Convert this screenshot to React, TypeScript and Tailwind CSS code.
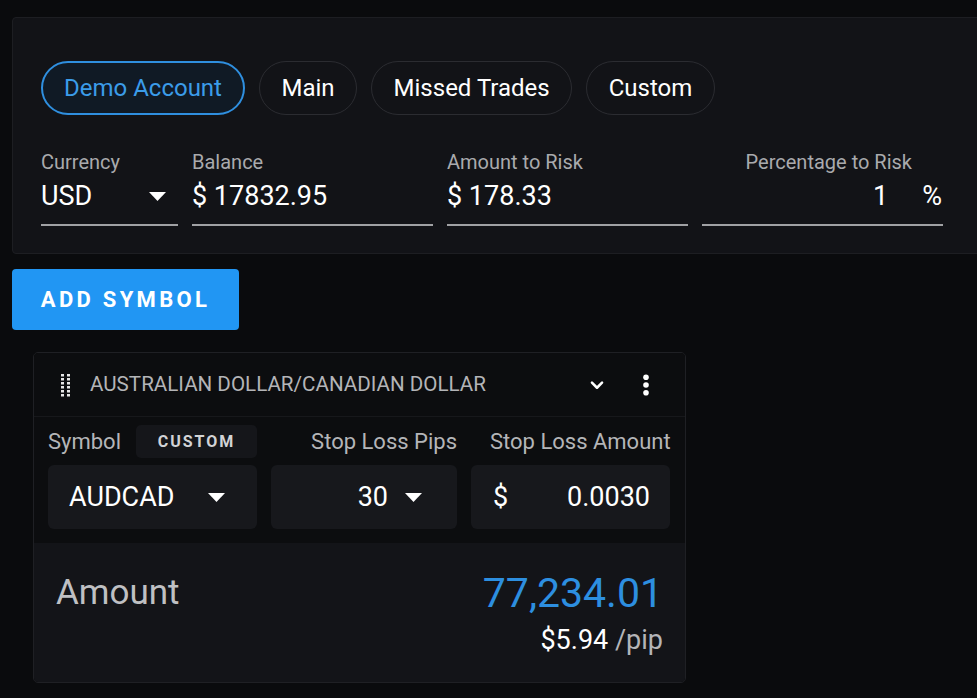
import React from 'react';

const Caret = () => (
    <svg width="17" height="9" viewBox="0 0 17 9" fill="currentColor"><path d="M0 0h17L8.5 9z" /></svg>
);

const Chip = ({ label, active }: { label: string; active?: boolean }) => (
    <div
        className={
            active
                ? 'h-[54px] px-[21px] flex items-center rounded-full border-2 border-[#2f8fdf] bg-[#101a25] text-[#3b9ce9] text-[24px]'
                : 'h-[54px] px-[21.5px] flex items-center rounded-full border border-[#2b2c31] text-white text-[24px]'
        }
    >
        {label}
    </div>
);

const Field = ({ label, children, className }: { label: string; children: React.ReactNode; className?: string }) => (
    <div className={'flex flex-col ' + (className || '')}>
        <span className="text-[20px] text-[#a9aaad] leading-[26px]">{label}</span>
        <div className="h-[51px] pb-[6px] flex items-center border-b-2 border-[#a0a1a4] text-white text-[27px]">{children}</div>
    </div>
);

const DragHandle = () => (
    <svg width="12" height="24" viewBox="0 0 12 24" fill="#e6e6e6">
        {[0, 1, 2, 3, 4, 5].map((r) => (
            <React.Fragment key={r}>
                <rect x="1" y={1 + r * 4} width="3" height="2.5" />
                <rect x="7" y={1 + r * 4} width="3" height="2.5" />
            </React.Fragment>
        ))}
    </svg>
);

export default function App() {
    return (
        <div className="w-[977px] h-[698px] overflow-hidden bg-[#0a0b0d]" style={{ fontFamily: 'Roboto, "Liberation Sans", sans-serif' }}>
            <div className="pt-[17px] pl-[12px]">
                {/* account panel */}
                <div className="w-[990px] h-[237px] bg-[#121317] border border-[#1d1e22] rounded-[4px] pl-[28px] pt-[43px]">
                    <div className="flex gap-[14px]">
                        <Chip label="Demo Account" active />
                        <Chip label="Main" />
                        <Chip label="Missed Trades" />
                        <Chip label="Custom" />
                    </div>
                    <div className="flex gap-[14px] mt-[34px]">
                        <Field label="Currency" className="w-[137px]">
                            <span className="flex-1">USD</span>
                            <span className="mr-[12px] text-white"><Caret /></span>
                        </Field>
                        <Field label="Balance" className="w-[241px]">
                            $ 17832.95
                        </Field>
                        <Field label="Amount to Risk" className="w-[241px]">
                            $ 178.33
                        </Field>
                        <div className="flex flex-col w-[241px]">
                            <span className="text-[20px] text-[#a9aaad] leading-[26px] text-right pr-[31px]">Percentage to Risk</span>
                            <div className="h-[51px] pb-[6px] flex items-center justify-end border-b-2 border-[#a0a1a4] text-white text-[27px]">
                                <span>1</span>
                                <span className="ml-[34px] mr-[1px]">%</span>
                            </div>
                        </div>
                    </div>
                </div>

                <button className="mt-[15px] h-[61px] w-[227px] rounded-[4px] bg-[#2196f3] text-white text-[22px] font-bold tracking-[3.3px]">
                    ADD SYMBOL
                </button>

                {/* symbol card */}
                <div className="mt-[22px] ml-[21px] w-[653px] border border-[#1f2024] rounded-[5px] overflow-hidden">
                    <div className="h-[64px] bg-[#0c0d0f] border-b border-[#17181b] flex items-center pl-[26px] pr-[35px]">
                        <DragHandle />
                        <span className="ml-[18px] text-[20.6px] text-[#b4b5b8] flex-1">AUSTRALIAN DOLLAR/CANADIAN DOLLAR</span>
                        <svg width="22" height="22" viewBox="0 0 24 24" fill="none" stroke="white" strokeWidth="2.8" strokeLinecap="round" strokeLinejoin="round">
                            <path d="M6.5 9.5l5.5 5.5 5.5-5.5" />
                        </svg>
                        <svg className="ml-[34px]" width="8" height="22" viewBox="0 0 8 22" fill="white">
                            <circle cx="4" cy="3.2" r="2.8" />
                            <circle cx="4" cy="11" r="2.8" />
                            <circle cx="4" cy="18.8" r="2.8" />
                        </svg>
                    </div>
                    <div className="bg-[#0c0d0f] px-[14px] pt-[8px] pb-[14px]">
                        <div className="flex gap-[14px]">
                            <div className="w-[209px]">
                                <div className="flex items-center h-[33px]">
                                    <span className="text-[22px] text-[#b4b5b8]">Symbol</span>
                                    <span className="ml-[15px] h-[33px] w-[121px] justify-center flex items-center rounded-[5px] bg-[#15161a] text-[#d2d3d6] text-[16px] font-bold tracking-[2px]">CUSTOM</span>
                                </div>
                                <div className="mt-[7px] h-[64px] rounded-[6px] bg-[#17181c] flex items-center pl-[21px] pr-[32px] text-white text-[27px]">
                                    <span className="flex-1">AUDCAD</span>
                                    <Caret />
                                </div>
                            </div>
                            <div className="w-[186px]">
                                <div className="h-[33px] flex items-center justify-end text-[22px] text-[#b4b5b8]">Stop Loss Pips</div>
                                <div className="mt-[7px] h-[64px] rounded-[6px] bg-[#17181c] flex items-center justify-end pr-[35px] text-white text-[27px]">
                                    <span>30</span>
                                    <span className="ml-[17px]"><Caret /></span>
                                </div>
                            </div>
                            <div className="w-[199px]">
                                <div className="h-[33px] flex items-center text-[22px] text-[#b4b5b8] pl-[19px] whitespace-nowrap">Stop Loss Amount</div>
                                <div className="mt-[7px] h-[64px] rounded-[6px] bg-[#17181c] flex items-center pl-[22px] pr-[20px] text-white text-[27px]">
                                    <span className="flex-1">$</span>
                                    <span>0.0030</span>
                                </div>
                            </div>
                        </div>
                    </div>
                    <div className="bg-[#131418] h-[139px] px-[22px] pt-[24px]">
                        <div className="flex items-center justify-between">
                            <span className="text-[35px] text-[#bfc0c3]">Amount</span>
                            <span className="text-[41px] text-[#2d8fe0] leading-[50px]">77,234.01</span>
                        </div>
                        <div className="text-right text-[27px] mt-[0px]">
                            <span className="text-white">$5.94</span>
                            <span className="text-[#b4b5b8]"> /pip</span>
                        </div>
                    </div>
                </div>
            </div>
        </div>
    );
}
